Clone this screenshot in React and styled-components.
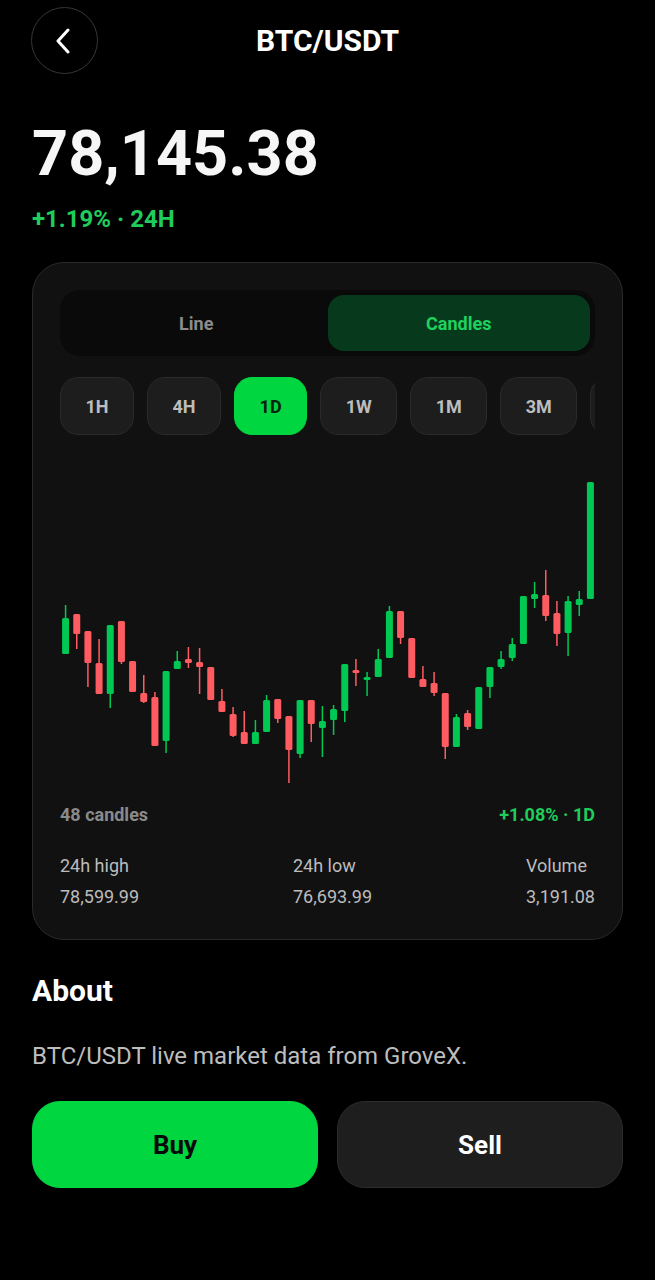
import React from "react";
import styled, { createGlobalStyle } from "styled-components";

const GlobalStyle = createGlobalStyle`
  html, body {
    margin: 0;
    background: #000;
  }
  body {
    font-family: Roboto, "Noto Sans", "Liberation Sans", sans-serif;
    color: #fff;
    -webkit-font-smoothing: antialiased;
  }
  * {
    box-sizing: border-box;
  }
`;

const GREEN = "#00c853";
const RED = "#ff5c61";

const frames = ["1H", "4H", "1D", "1W", "1M", "3M", "1Y"];

// [up, wickTop, bodyTop, bodyBottom, wickBottom] in chart px
const candles = [
  [1, 605, 618, 654, 654],
  [0, 614, 614, 634, 649],
  [0, 631, 631, 663, 687],
  [0, 639, 663, 694, 694],
  [1, 625, 625, 694, 708],
  [0, 621, 621, 662, 664],
  [0, 661, 661, 692, 692],
  [0, 675, 693, 702, 703],
  [0, 692, 697, 746, 746],
  [1, 671, 671, 741, 753],
  [1, 651, 661, 669, 669],
  [0, 647, 659, 663, 668],
  [0, 648, 662, 667, 694],
  [0, 667, 667, 700, 700],
  [0, 689, 701, 712, 712],
  [0, 707, 714, 736, 737],
  [0, 711, 732, 744, 744],
  [1, 720, 732, 744, 744],
  [1, 695, 700, 732, 732],
  [0, 699, 699, 719, 723],
  [0, 716, 716, 750, 783],
  [1, 700, 700, 754, 758],
  [0, 700, 700, 724, 742],
  [1, 706, 721, 728, 757],
  [1, 705, 709, 720, 735],
  [1, 664, 664, 711, 722],
  [0, 659, 670, 673, 686],
  [1, 672, 677, 679, 696],
  [1, 649, 659, 677, 677],
  [1, 606, 611, 658, 658],
  [0, 611, 611, 638, 644],
  [0, 638, 638, 678, 678],
  [0, 666, 679, 687, 687],
  [0, 672, 683, 693, 696],
  [0, 693, 693, 747, 759],
  [1, 714, 717, 747, 747],
  [0, 710, 713, 727, 730],
  [1, 687, 687, 729, 729],
  [1, 667, 667, 687, 698],
  [1, 651, 659, 667, 669],
  [1, 638, 644, 658, 661],
  [1, 596, 596, 644, 644],
  [1, 582, 594, 599, 608],
  [0, 570, 595, 616, 621],
  [0, 601, 613, 634, 646],
  [1, 596, 601, 633, 656],
  [1, 591, 599, 605, 616],
  [1, 482, 482, 599, 599],
];

const CHART_W = 536;
const CHART_H = 359;
const CHART_TOP = 445;

const CandleChart = () => {
  const step = CHART_W / candles.length;
  return (
    <svg width={CHART_W} height={CHART_H} viewBox={`0 0 ${CHART_W} ${CHART_H}`}>
      {candles.map(([up, wt, bt, bb, wb], i) => {
        const cx = (i + 0.5) * step;
        const fill = up ? GREEN : RED;
        const h = Math.max(bb - bt, 3);
        return (
          <g key={i} fill={fill}>
            <rect x={cx - 0.75} y={wt - CHART_TOP} width={1.5} height={wb - wt} />
            <rect x={cx - 3.5} y={bt - CHART_TOP} width={7} height={h} rx={1.5} />
          </g>
        );
      })}
    </svg>
  );
};

const App = () => {
  return (
    <Page>
      <GlobalStyle />
      <Header>
        <BackButton aria-label="Back">
          <svg width="16" height="26" viewBox="0 0 16 26" fill="none">
            <path
              d="M13 2 L3 13 L13 24"
              stroke="#fff"
              strokeWidth="3"
              strokeLinecap="round"
              strokeLinejoin="round"
            />
          </svg>
        </BackButton>
        <Title>BTC/USDT</Title>
        <span />
      </Header>

      <Price>78,145.38</Price>
      <Change>+1.19% · 24H</Change>

      <Card>
        <Toggle>
          <ToggleOption>Line</ToggleOption>
          <ToggleOption $active>Candles</ToggleOption>
        </Toggle>

        <Chips>
          {frames.map((f) => (
            <Chip key={f} $active={f === "1D"}>
              {f}
            </Chip>
          ))}
        </Chips>

        <ChartBox>
          <CandleChart />
        </ChartBox>

        <ChartFoot>
          <Muted>48 candles</Muted>
          <Gain>+1.08% · 1D</Gain>
        </ChartFoot>

        <Stats>
          <Stat>
            <StatLabel>24h high</StatLabel>
            <StatValue>78,599.99</StatValue>
          </Stat>
          <Stat>
            <StatLabel>24h low</StatLabel>
            <StatValue>76,693.99</StatValue>
          </Stat>
          <Stat>
            <StatLabel>Volume</StatLabel>
            <StatValue>3,191.08</StatValue>
          </Stat>
        </Stats>
      </Card>

      <AboutTitle>About</AboutTitle>
      <AboutText>BTC/USDT live market data from GroveX.</AboutText>

      <Actions>
        <ActionButton $variant="buy">Buy</ActionButton>
        <ActionButton>Sell</ActionButton>
      </Actions>
    </Page>
  );
};

const Page = styled.div`
  padding: 7px 32px 60px;
  min-height: 1280px;
  background: #000;
`;

const Header = styled.header`
  display: grid;
  grid-template-columns: 67px 1fr 67px;
  align-items: center;
`;

const BackButton = styled.button`
  width: 67px;
  height: 67px;
  margin-left: -1px;
  border-radius: 50%;
  border: 1.5px solid #363636;
  background: transparent;
  display: flex;
  align-items: center;
  justify-content: center;
  padding: 0 4px 0 0;
  cursor: pointer;
`;

const Title = styled.h1`
  margin: 0;
  text-align: center;
  font-size: 30px;
  font-weight: 700;
  line-height: 36px;
  color: #fff;
`;

const Price = styled.div`
  margin-top: 48px;
  font-size: 63px;
  font-weight: 700;
  line-height: 64px;
  color: #f6f6f6;
`;

const Change = styled.div`
  margin-top: 19px;
  font-size: 24px;
  font-weight: 700;
  line-height: 28px;
  color: #1fcc5c;
`;

const Card = styled.section`
  margin-top: 29px;
  background: #111111;
  border: 1px solid #2a2a2a;
  border-radius: 32px;
  padding: 27px 27px 31px;
`;

const Toggle = styled.div`
  display: flex;
  height: 66px;
  padding: 5px;
  background: #0a0a0a;
  border-radius: 20px;
`;

const ToggleOption = styled.div`
  flex: 1;
  display: flex;
  align-items: center;
  justify-content: center;
  border-radius: 16px;
  font-size: 18px;
  font-weight: 700;
  color: ${(p) => (p.$active ? "#1fd15e" : "#8c8c8c")};
  background: ${(p) => (p.$active ? "#073a1d" : "transparent")};
`;

const Chips = styled.div`
  margin-top: 21px;
  display: flex;
  gap: 13px;
  overflow: hidden;
`;

const Chip = styled.div`
  flex: none;
  height: 58px;
  padding: 0 24.5px;
  display: flex;
  align-items: center;
  border-radius: 18px;
  font-size: 18px;
  font-weight: 700;
  color: ${(p) => (p.$active ? "#06210f" : "#bdbdbd")};
  background: ${(p) => (p.$active ? "#00d63f" : "#1d1d1d")};
  border: 1px solid ${(p) => (p.$active ? "#00d63f" : "#2a2a2a")};
`;

const ChartBox = styled.div`
  margin-top: 10px;
  height: ${CHART_H}px;
`;

const ChartFoot = styled.div`
  display: flex;
  justify-content: space-between;
  font-size: 18px;
  font-weight: 700;
  line-height: 22px;
`;

const Muted = styled.span`
  color: #8a8a8a;
`;

const Gain = styled.span`
  color: #1fcc5c;
`;

const Stats = styled.div`
  margin-top: 29px;
  display: flex;
  justify-content: space-between;
`;

const Stat = styled.div`
  display: flex;
  flex-direction: column;
  gap: 9px;
  font-size: 18px;
  line-height: 22px;
  color: #bcbcbc;
`;

const StatLabel = styled.span``;

const StatValue = styled.span``;

const AboutTitle = styled.h2`
  margin: 33px 0 0;
  font-size: 30px;
  font-weight: 700;
  line-height: 36px;
  color: #fff;
`;

const AboutText = styled.p`
  margin: 33px 0 0;
  font-size: 24px;
  line-height: 28px;
  color: #bdbdbd;
`;

const Actions = styled.div`
  margin-top: 31px;
  display: grid;
  grid-template-columns: 1fr 1fr;
  gap: 19px;
`;

const ActionButton = styled.button`
  height: 87px;
  border-radius: 28px;
  font-family: inherit;
  font-size: 26px;
  font-weight: 700;
  cursor: pointer;
  color: ${(p) => (p.$variant === "buy" ? "#0a0a0a" : "#fff")};
  background: ${(p) => (p.$variant === "buy" ? "#00d640" : "#1e1e1e")};
  border: 1px solid ${(p) => (p.$variant === "buy" ? "#00d640" : "#2c2c2c")};
`;

export default App;
